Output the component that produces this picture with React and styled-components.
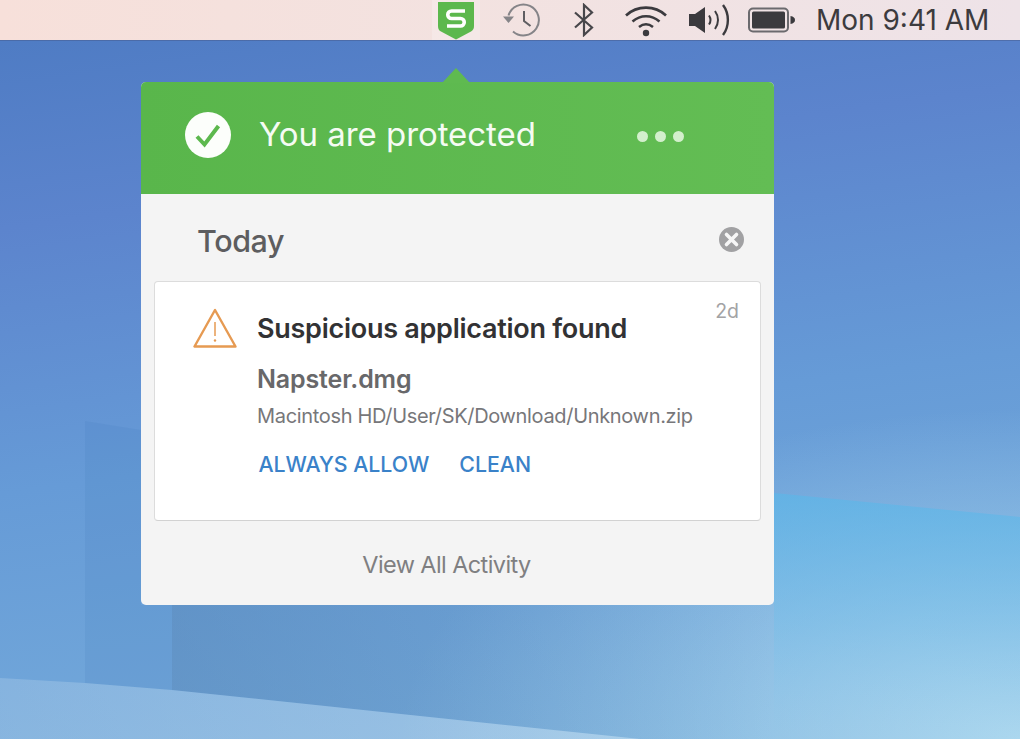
import React from "react";
import styled, { createGlobalStyle } from "styled-components";

const Global = createGlobalStyle`
  html, body {
    margin: 0;
    padding: 0;
    height: 100%;
    overflow: hidden;
  }
  body {
    font-family: Inter, "Noto Sans", "Liberation Sans", sans-serif;
  }
`;

const Desktop = styled.div`
  position: relative;
  width: 1020px;
  height: 739px;
  overflow: hidden;
  background:
    radial-gradient(ellipse 620px 330px at 100% 100%, rgba(180, 222, 242, 0.85) 0%, rgba(180, 222, 242, 0) 100%),
    linear-gradient(172deg, #4f7cc4 5%, #5c84cd 26%, #669bd7 56%, #78aedb 100%);
`;

const Wallpaper = styled.svg`
  position: absolute;
  inset: 0;
`;

const MenuBar = styled.header`
  position: relative;
  display: flex;
  align-items: center;
  height: 40px;
  background: linear-gradient(90deg, #f7e0da 0%, #f3e2e0 45%, #eee3e8 100%);
  box-shadow: 0 1px 0 rgba(70, 90, 140, 0.5);
`;

const ShieldSlot = styled.div`
  display: flex;
  justify-content: center;
  width: 48px;
  height: 40px;
  margin-left: 432px;
  background: rgba(255, 255, 255, 0.22);
`;

const MenuIcons = styled.div`
  display: flex;
  align-items: center;
  margin-left: 22px;
`;

const MenuIcon = styled.svg`
  display: block;
  margin-right: ${(p) => p.$gap}px;
`;

const Clock = styled.span`
  font-size: 28px;
  white-space: nowrap;
  color: #3c3b3e;
`;

const Popover = styled.section`
  position: relative;
  width: 633px;
  margin: 42px 0 0 141px;
  background: #f4f4f4;
  border-radius: 5px;

  &::before {
    content: "";
    position: absolute;
    left: 301px;
    top: -14px;
    border-left: 14px solid transparent;
    border-right: 14px solid transparent;
    border-bottom: 15px solid #5fba50;
  }
`;

const Banner = styled.div`
  display: flex;
  align-items: center;
  box-sizing: border-box;
  height: 112px;
  padding: 0 0 6px 44px;
  background: linear-gradient(90deg, #59b64b, #63bd54);
  border-radius: 5px 5px 0 0;
`;

const StatusText = styled.h2`
  margin: 0 0 2px 28px;
  width: 378px;
  font-size: 33px;
  font-weight: 400;
  letter-spacing: -0.05px;
  color: #f5fbf3;
  white-space: nowrap;
`;

const Dots = styled.div`
  display: flex;
  gap: 7px;
  margin-top: 2px;
`;

const Dot = styled.span`
  width: 11px;
  height: 11px;
  border-radius: 50%;
  background: #d3efcc;
`;

const SectionHead = styled.div`
  display: flex;
  align-items: center;
  justify-content: space-between;
  box-sizing: border-box;
  height: 87px;
  padding: 4px 30px 0 56px;
`;

const SectionTitle = styled.h3`
  margin: 2px 0 0;
  font-size: 30.5px;
  font-weight: 500;
  letter-spacing: -0.4px;
  color: #5d5d5f;
`;

const Card = styled.article`
  position: relative;
  display: flex;
  box-sizing: border-box;
  height: 240px;
  margin: 0 13px;
  padding: 26px 0 0 38px;
  background: #fff;
  border: 1.5px solid #dcdcdc;
  border-bottom-color: #d2d2d2;
  border-radius: 4px;
`;

const CardBody = styled.div`
  display: flex;
  flex-direction: column;
  margin: 1px 0 0 20px;
`;

const Age = styled.span`
  position: absolute;
  top: 17px;
  right: 21px;
  font-size: 19.5px;
  color: #a3a3a5;
`;

const Title = styled.h4`
  margin: 0;
  font-size: 27px;
  line-height: 40px;
  font-weight: 600;
  letter-spacing: -0.27px;
  color: #323234;
  white-space: nowrap;
`;

const FileName = styled.div`
  margin-top: 10px;
  font-size: 25px;
  line-height: 40px;
  font-weight: 600;
  letter-spacing: -0.15px;
  color: #68686a;
`;

const FilePath = styled.div`
  margin-top: 2px;
  font-size: 20px;
  line-height: 30px;
  letter-spacing: -0.33px;
  color: #77777a;
  white-space: nowrap;
`;

const Actions = styled.div`
  display: flex;
  gap: 30px;
  margin: 18px 0 0 1.5px;
`;

const ActionLink = styled.a`
  font-size: 21.3px;
  line-height: 30px;
  font-weight: 500;
  color: #3a82c9;
`;

const Footer = styled.div`
  display: flex;
  align-items: center;
  justify-content: center;
  box-sizing: border-box;
  height: 84px;
  padding: 2px 22px 0 0;
  font-size: 23.5px;
  letter-spacing: -0.6px;
  color: #7f7f81;
`;

const Shield = () => (
  <svg width="38" height="40" viewBox="0 0 38 40">
    <path d="M1 2h36v24c0 3-1 4-3 5.500L19 39.500 4 31.500C2 30.500 1 29 1 26z" fill="#5cb84d" />
    <path
      d="M28 11H14.500a3 3 0 0 0 0 7.500h9a3 3 0 0 1 0 7.500H10"
      fill="none"
      stroke="#fff"
      strokeWidth="3.600"
    />
  </svg>
);

const TimeMachine = () => (
  <MenuIcon $gap={31} width="40" height="36" viewBox="0 0 40 36" fill="none" stroke="#858488" strokeWidth="2">
    <path d="M6.500 13.500A15.500 15.500 0 1 1 11 29.500" />
    <path d="M1 14.500h11l-5.500 6.500z" fill="#858488" stroke="none" />
    <path d="M22 9v10l6.500 5" stroke="#5f5e62" />
  </MenuIcon>
);

const Bluetooth = () => (
  <MenuIcon $gap={29} width="22" height="34" viewBox="0 0 22 34" fill="none" stroke="#47464a" strokeWidth="2.200">
    <path d="M2 9.500l17 15L11 32V2l8 7.500-17 15" />
  </MenuIcon>
);

const Wifi = () => (
  <MenuIcon $gap={20} width="44" height="34" viewBox="0 0 44 34" fill="none" stroke="#3b3a3e" strokeWidth="2.600">
    <path d="M2 12.500C13 2 31 2 42 12.500" />
    <path d="M8.500 18.500c8-7 19-7 27 0" />
    <path d="M15 24c4.500-3.500 9.500-3.500 14 0" />
    <circle cx="22" cy="30" r="3.200" fill="#3b3a3e" stroke="none" />
  </MenuIcon>
);

const Volume = () => (
  <MenuIcon $gap={16} width="44" height="34" viewBox="0 0 44 34" fill="none" stroke="#3b3a3e" strokeWidth="2">
    <path d="M1 11h6l10-7v26l-10-7H1z" fill="#3b3a3e" stroke="none" />
    <path d="M21 12.500c2 3 2 6 0 9" />
    <path d="M27 8c4 5.500 4 12.500 0 18" />
    <path d="M35 2c6.500 8.500 6.500 21.500 0 30" strokeWidth="2.400" />
  </MenuIcon>
);

const Battery = () => (
  <MenuIcon $gap={20} width="48" height="26" viewBox="0 0 48 26" fill="none">
    <rect x="1" y="1.500" width="39" height="23" rx="4" stroke="#6b6a6e" strokeWidth="2" />
    <rect x="4" y="4.500" width="33" height="17" rx="1.500" fill="#3b3a3e" />
    <path d="M42.500 9c3 .5 4.500 2 4.500 4s-1.500 3.500-4.500 4z" fill="#3b3a3e" />
  </MenuIcon>
);

const CheckBadge = () => (
  <svg width="46" height="46" viewBox="0 0 46 46">
    <circle cx="23" cy="23" r="23" fill="#fcfefb" />
    <path d="M12 24.500l7.500 8L33.500 14" fill="none" stroke="#5cb84d" strokeWidth="4" />
  </svg>
);

const CloseBadge = () => (
  <svg width="25" height="25" viewBox="0 0 25 25">
    <circle cx="12.500" cy="12.500" r="12.500" fill="#a1a1a3" />
    <path d="M7.500 7.500l10 10M17.500 7.500l-10 10" stroke="#f6f6f6" strokeWidth="3.600" strokeLinecap="round" />
  </svg>
);

const Warning = () => (
  <svg width="44" height="40" viewBox="0 0 44 40" fill="none" stroke="#e69a52" strokeLinejoin="round">
    <path d="M22 2L1.500 38.500h41z" strokeWidth="2.400" />
    <path d="M22 14v14" strokeWidth="1.500" />
    <circle cx="22" cy="32.500" r="1.200" fill="#e69a52" stroke="none" />
  </svg>
);

export default function App() {
  return (
    <Desktop>
      <Global />
      <Wallpaper width="1020" height="739" viewBox="0 0 1020 739">
        <defs>
          <linearGradient id="shade" x1="0" x2="1" y1="0" y2="0">
            <stop offset="0" stopColor="#4f7cac" stopOpacity="0.38" />
            <stop offset="1" stopColor="#4f7cac" stopOpacity="0" />
          </linearGradient>
          <linearGradient id="glow" x1="0" x2="0" y1="0" y2="1">
            <stop offset="0" stopColor="#5cb6e8" stopOpacity="0.7" />
            <stop offset="0.55" stopColor="#6cc0ec" stopOpacity="0.3" />
            <stop offset="1" stopColor="#8ccdee" stopOpacity="0" />
          </linearGradient>
          <linearGradient id="sheen" x1="0" x2="1" y1="0" y2="0">
            <stop offset="0" stopColor="#d6e8f4" stopOpacity="0.22" />
            <stop offset="1" stopColor="#d6e8f4" stopOpacity="0.42" />
          </linearGradient>
        </defs>
        <path d="M85 421l56 9v175h31v85l-87-7z" fill="#3f78b8" opacity="0.14" />
        <path d="M172 605h602v134H640L172 690z" fill="url(#shade)" />
        <path d="M774 493l246 24v222H774z" fill="url(#glow)" />
        <path d="M0 678l85 5 87 7 468 49H0z" fill="url(#sheen)" />
      </Wallpaper>
      <MenuBar>
        <ShieldSlot>
          <Shield />
        </ShieldSlot>
        <MenuIcons>
          <TimeMachine />
          <Bluetooth />
          <Wifi />
          <Volume />
          <Battery />
          <Clock>Mon 9:41 AM</Clock>
        </MenuIcons>
      </MenuBar>
      <Popover>
        <Banner>
          <CheckBadge />
          <StatusText>You are protected</StatusText>
          <Dots>
            <Dot />
            <Dot />
            <Dot />
          </Dots>
        </Banner>
        <SectionHead>
          <SectionTitle>Today</SectionTitle>
          <CloseBadge />
        </SectionHead>
        <Card>
          <Age>2d</Age>
          <Warning />
          <CardBody>
            <Title>Suspicious application found</Title>
            <FileName>Napster.dmg</FileName>
            <FilePath>Macintosh HD/User/SK/Download/Unknown.zip</FilePath>
            <Actions>
              <ActionLink>ALWAYS ALLOW</ActionLink>
              <ActionLink>CLEAN</ActionLink>
            </Actions>
          </CardBody>
        </Card>
        <Footer>View All Activity</Footer>
      </Popover>
    </Desktop>
  );
}
